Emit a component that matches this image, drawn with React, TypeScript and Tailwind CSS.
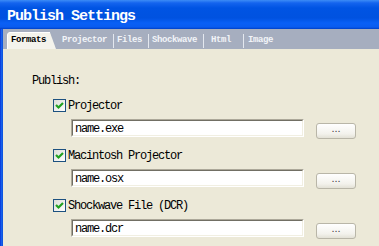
import React from "react";

const mono = "font-['Liberation_Mono',monospace]";

function Check() {
  return (
    <div className="w-[13px] h-[13px] shrink-0 border border-[#1C5180] bg-[linear-gradient(135deg,#DCDCD7,#FFFFFF)] flex items-center justify-center">
      <svg width="11" height="11" viewBox="0 0 11 11">
        <polyline points="2,5 4.5,7.5 9,3" fill="none" stroke="#21A121" strokeWidth="2.2" />
      </svg>
    </div>
  );
}

function Item({ label, value }: { label: string; value: string }) {
  return (
    <div className="h-[50px] flex flex-col">
      <div className="h-[13px] flex items-center gap-[2px]">
        <Check />
        <span className={`${mono} text-[12px] tracking-[-1.2px] leading-[13px] text-black pt-[2px]`}>{label}</span>
      </div>
      <div className="mt-[7px] pl-[18px] flex items-start">
        <div className="w-[233px] h-[18px] border border-t-[#ACA899] border-l-[#ACA899] border-b-white border-r-white">
          <div className="h-full border border-t-[#716F64] border-l-[#716F64] border-b-[#F1EFE2] border-r-[#F1EFE2] bg-white pl-[2px] flex items-center">
            <span className={`${mono} text-[12px] tracking-[-1.2px] leading-[14px] text-black pt-[2px]`}>{value}</span>
          </div>
        </div>
        <div className="ml-[12px] mt-[4px] w-[40px] h-[16px] rounded-[3px] border border-[#B9B6A8] bg-[linear-gradient(to_bottom,#FFFFFF,#F3F2EC_70%,#E3E1D6)] flex items-center justify-center pb-[5px]">
          <span className="font-['Liberation_Sans',sans-serif] text-[11px] leading-none text-[#444]">...</span>
        </div>
      </div>
    </div>
  );
}

export default function App() {
  return (
    <div className="w-[379px] h-[246px] overflow-hidden flex flex-col bg-[#ECE9D8]">
      <div className="h-[29px] shrink-0 flex items-center pl-[7px] pt-[3px] bg-[linear-gradient(to_bottom,#3C8CF6_0px,#1464EE_3px,#0054E3_8px,#0052E0_18px,#0A60F6_23px,#0A5CF0_27px,#0040C8_29px)]">
        <span className={`${mono} text-white font-bold text-[15px] tracking-[-1px] leading-none`}>Publish Settings</span>
      </div>
      <div className="flex flex-1">
        <div className="w-[3px] shrink-0 bg-[linear-gradient(to_right,#0831D9,#1660EA,#0B50DB)]" />
        <div className="flex-1 flex flex-col">
          <div className={`h-[20px] shrink-0 bg-[#A6AEBF] flex items-end pl-[4px] ${mono} font-bold text-[9px] tracking-[-0.4px]`}>
            <div className="relative w-[49px] h-[17px] flex items-center pl-[4px]">
              <svg className="absolute inset-0" width="49" height="17" viewBox="0 0 49 17">
                <path d="M0.5 17 L0.5 3 Q0.5 0.5 3 0.5 L43 0.5 L49 17 Z" fill="#F4F3EC" />
                <path d="M0.5 17 L0.5 3 Q0.5 0.5 3 0.5 L43 0.5" fill="none" stroke="#FFFFFF" />
              </svg>
              <span className="relative text-black">Formats</span>
            </div>
            <div className="w-[57px] h-[17px] flex items-center pl-[6px] text-[#F2F4F8]">Projector</div>
            <div className="w-[35px] h-[17px] flex items-center text-[#F2F4F8]">
              <div className="w-px h-[14px] bg-[#E4E8EF] mr-[3px]" />Files
            </div>
            <div className="w-[55px] h-[17px] flex items-center text-[#F2F4F8]">
              <div className="w-px h-[14px] bg-[#E4E8EF] mr-[3px]" />Shockwave
            </div>
            <div className="w-[40px] h-[17px] flex items-center text-[#F2F4F8]">
              <div className="w-px h-[14px] bg-[#E4E8EF] mr-[7px]" />Html
            </div>
            <div className="w-[45px] h-[17px] flex items-center text-[#F2F4F8]">
              <div className="w-px h-[14px] bg-[#E4E8EF] mr-[4px]" />Image
            </div>
          </div>
          <div className="flex-1 bg-[#ECE9D8] flex flex-col">
            <div className={`mt-[26px] pl-[29px] ${mono} text-[12px] tracking-[-1.2px] leading-[13px] text-black`}>Publish:</div>
            <div className="mt-[11px] pl-[50px] flex flex-col">
              <Item label="Projector" value="name.exe" />
              <Item label="Macintosh Projector" value="name.osx" />
              <Item label="Shockwave File (DCR)" value="name.dcr" />
            </div>
          </div>
        </div>
      </div>
    </div>
  );
}
